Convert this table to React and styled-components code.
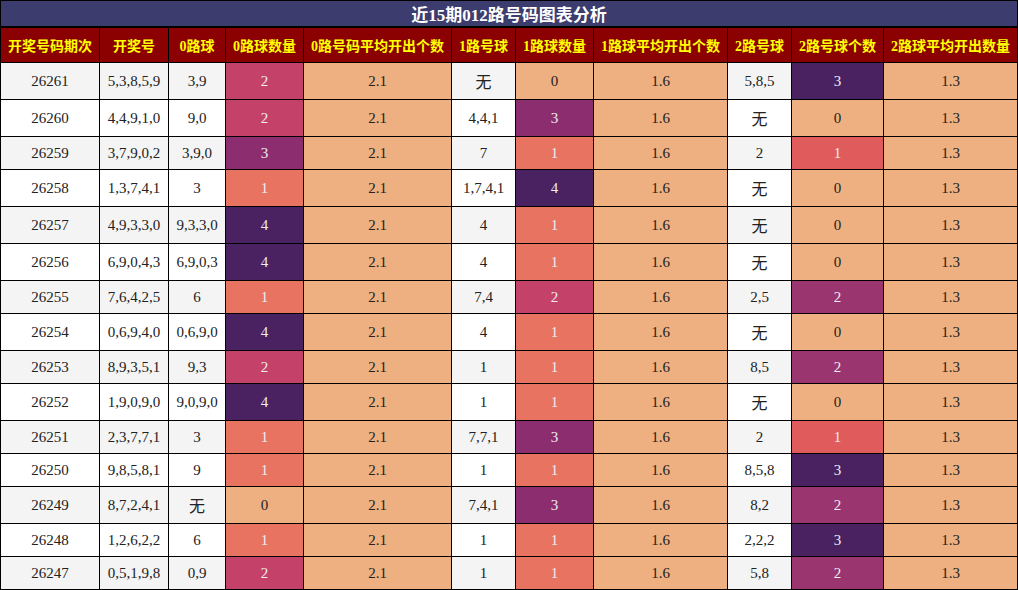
import React from 'react';
import styled, { createGlobalStyle } from 'styled-components';

const GlobalStyle = createGlobalStyle`
    body {
        margin: 0;
        background: #FFFFFF;
    }
`

const columns = [
    { title: '开奖号码期次', width: 99 },
    { title: '开奖号', width: 69 },
    { title: '0路球', width: 57 },
    { title: '0路球数量', width: 78 },
    { title: '0路号码平均开出个数', width: 148 },
    { title: '1路号球', width: 64 },
    { title: '1路球数量', width: 78 },
    { title: '1路球平均开出个数', width: 134 },
    { title: '2路号球', width: 64 },
    { title: '2路号球个数', width: 92 },
    { title: '2路球平均开出数量', width: 134 },
]

const rows = [
    ['26261', '5,3,8,5,9', '3,9', 2, '无', 0, '5,8,5', 3],
    ['26260', '4,4,9,1,0', '9,0', 2, '4,4,1', 3, '无', 0],
    ['26259', '3,7,9,0,2', '3,9,0', 3, '7', 1, '2', 1],
    ['26258', '1,3,7,4,1', '3', 1, '1,7,4,1', 4, '无', 0],
    ['26257', '4,9,3,3,0', '9,3,3,0', 4, '4', 1, '无', 0],
    ['26256', '6,9,0,4,3', '6,9,0,3', 4, '4', 1, '无', 0],
    ['26255', '7,6,4,2,5', '6', 1, '7,4', 2, '2,5', 2],
    ['26254', '0,6,9,4,0', '0,6,9,0', 4, '4', 1, '无', 0],
    ['26253', '8,9,3,5,1', '9,3', 2, '1', 1, '8,5', 2],
    ['26252', '1,9,0,9,0', '9,0,9,0', 4, '1', 1, '无', 0],
    ['26251', '2,3,7,7,1', '3', 1, '7,7,1', 3, '2', 1],
    ['26250', '9,8,5,8,1', '9', 1, '1', 1, '8,5,8', 3],
    ['26249', '8,7,2,4,1', '无', 0, '7,4,1', 3, '8,2', 2],
    ['26248', '1,2,6,2,2', '6', 1, '1', 1, '2,2,2', 3],
    ['26247', '0,5,1,9,8', '0,9', 2, '1', 1, '5,8', 2],
]

// heat colours, 0路 / 1路 run 0..4, 2路 runs 0..3
const heat04 = ['#EEB080', '#E87361', '#C44269', '#8B2D6F', '#4A2161']
const heat03 = ['#EEB080', '#E05B5B', '#9A3570', '#4A2161']

function HeatCell({ value, scale }){
    return <Heat bg={scale[value]} light={value > 0}>{value}</Heat>
}

export default function App(){
    return(
        <>
            <GlobalStyle />
            <Table>
                <colgroup>
                    {columns.map(col => <col key={col.title} style={{ width: col.width }} />)}
                </colgroup>
                <thead>
                    <tr>
                        <Title colSpan={columns.length}>近15期012路号码图表分析</Title>
                    </tr>
                    <tr>
                        {columns.map(col => <Head key={col.title}>{col.title}</Head>)}
                    </tr>
                </thead>
                <tbody>
                    {rows.map((row, i) => {
                        const tall = row.includes('无');
                        return(
                            <Row key={row[0]} striped={i % 2 === 0} tall={tall}>
                                <Plain>{row[0]}</Plain>
                                <Plain>{row[1]}</Plain>
                                <Plain none={row[2] === '无'}>{row[2]}</Plain>
                                <HeatCell value={row[3]} scale={heat04} />
                                <Avg>2.1</Avg>
                                <Plain none={row[4] === '无'}>{row[4]}</Plain>
                                <HeatCell value={row[5]} scale={heat04} />
                                <Avg>1.6</Avg>
                                <Plain none={row[6] === '无'}>{row[6]}</Plain>
                                <HeatCell value={row[7]} scale={heat03} />
                                <Avg>1.3</Avg>
                            </Row>
                        )
                    })}
                </tbody>
            </Table>
        </>
    )
}

const Table = styled.table`
    width: 1018px;
    table-layout: fixed;
    border-collapse: collapse;
    font-family: 'Liberation Serif', 'Noto Sans CJK SC', serif;
    td, th {
        border: 1px solid #000000;
        text-align: center;
        vertical-align: middle;
        padding: 0;
    }
`
const Title = styled.th`
    height: 24px;
    background: #3C3C6E;
    color: #FFFFFF;
    font-size: 17px;
    font-weight: 700;
    border-bottom: 2px solid #000000 !important;
`
const Head = styled.th`
    height: 34px;
    background: #8B0000;
    color: #FFFF00;
    font-size: 14px;
    font-weight: 700;
    white-space: nowrap;
`
const Row = styled.tr`
    background: ${props => props.striped ? '#F4F4F4' : '#FFFFFF'};
    td {
        height: ${props => props.tall ? '36px' : '32px'};
        font-size: 15px;
        color: #222222;
    }
`
const Plain = styled.td`
    font-family: ${props => props.none ? "'Noto Sans CJK SC', sans-serif" : "'Liberation Serif', serif"};
    font-size: ${props => props.none ? '16px' : '15px'} !important;
`
const Heat = styled.td`
    background: ${props => props.bg};
    color: ${props => props.light ? '#EEEEEE' : '#222222'} !important;
`
const Avg = styled.td`
    background: #EEB080;
`
